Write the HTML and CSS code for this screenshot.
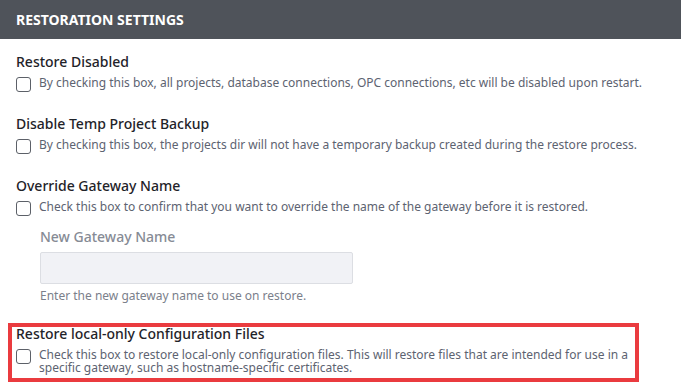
FILE: index.html
```
<!DOCTYPE html>
<html>
<head>
<meta charset="utf-8">
<link rel="stylesheet" href="styles.css">
</head>
<body>
<div class="header">Restoration Settings</div>
<div class="content">
  <div class="field">
    <div class="title">Restore Disabled</div>
    <label class="check"><span class="box"></span><span class="desc">By checking this box, all projects, database connections, OPC connections, etc will be disabled upon restart.</span></label>
  </div>
  <div class="field">
    <div class="title">Disable Temp Project Backup</div>
    <label class="check"><span class="box"></span><span class="desc">By checking this box, the projects dir will not have a temporary backup created during the restore process.</span></label>
  </div>
  <div class="field">
    <div class="title">Override Gateway Name</div>
    <label class="check"><span class="box"></span><span class="desc">Check this box to confirm that you want to override the name of the gateway before it is restored.</span></label>
    <div class="sub">
      <div class="sub-label">New Gateway Name</div>
      <div class="input"></div>
      <div class="help">Enter the new gateway name to use on restore.</div>
    </div>
  </div>
  <div class="field highlight">
    <div class="title">Restore local-only Configuration Files</div>
    <label class="check"><span class="box"></span><span class="desc">Check this box to restore local-only configuration files. This will restore files that are intended for use in a specific gateway, such as hostname-specific certificates.</span></label>
  </div>
</div>
</body>
</html>
```
FILE: styles.css
```
html, body {
  margin: 0;
  padding: 0;
  background: #ffffff;
  font-family: "Noto Sans", "Open Sans", sans-serif;
}
.header {
  height: 39px;
  background: #4f535a;
  color: #ffffff;
  font-weight: 700;
  font-size: 14px;
  text-transform: uppercase;
  display: flex;
  align-items: center;
  padding-left: 16px;
  box-sizing: border-box;
}
.content {
  padding-top: 12px;
}
.field {
  border: 4px solid transparent;
  padding: 0 12px 4px 12px;
  margin: 0 0 13px 0;
}
.title {
  font-size: 14px;
  font-weight: 500;
  color: #1f2329;
  line-height: 14px;
}
.check {
  display: flex;
  align-items: flex-start;
  gap: 8px;
  margin-top: 7px;
}
.box {
  flex: none;
  box-sizing: border-box;
  width: 15px;
  height: 15px;
  border: 1.2px solid #5c6068;
  border-radius: 3px;
  margin-top: 1px;
}
.desc {
  font-size: 12px;
  line-height: 13px;
  color: #5d6371;
}
.sub {
  padding-left: 24px;
  margin-top: 14px;
}
.sub-label {
  font-size: 14px;
  font-weight: 500;
  color: #868b95;
  line-height: 14px;
}
.input {
  box-sizing: border-box;
  width: 313px;
  height: 32px;
  margin-top: 8px;
  background: #f1f2f6;
  border: 1px solid #dcdee3;
  border-radius: 2px;
}
.help {
  font-size: 12px;
  color: #7b808b;
  margin-top: 5px;
  line-height: 13px;
}
.highlight {
  border-color: #ea3b3f;
  width: 615px;
  padding: 0 4px 4px 4px;
  margin: 0 0 0 8px;
}
```
